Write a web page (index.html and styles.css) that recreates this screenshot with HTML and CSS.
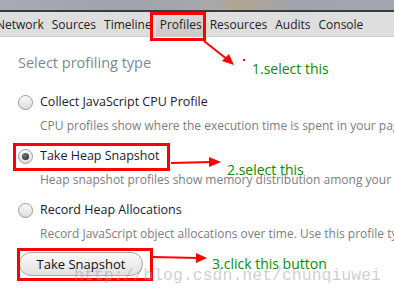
FILE: index.html
```html
<!DOCTYPE html>
<html lang="en">
<head>
    <meta charset="UTF-8">
    <title>Profiles</title>
    <link rel="stylesheet" href="styles.css">
</head>
<body>
    <div class="shot">
        <div class="window-strip"></div>

        <!-- DevTools tabs -->
        <div class="toolbar">
            <span class="tab tab-first">Network</span>
            <span class="tab">Sources</span>
            <span class="tab">Timeline</span>
            <span class="tab active">Profiles</span>
            <span class="tab">Resources</span>
            <span class="tab">Audits</span>
            <span class="tab">Console</span>
        </div>

        <div class="panel">
            <h2 class="panel-title">Select profiling type</h2>

            <div class="option">
                <label class="option-label"><span class="radio"></span>Collect JavaScript CPU Profile</label>
                <p class="option-desc">CPU profiles show where the execution time is spent in your page's JavaScript functions.</p>
            </div>

            <div class="option">
                <label class="option-label"><span class="radio checked"></span>Take Heap Snapshot</label>
                <p class="option-desc">Heap snapshot profiles show memory distribution among your page's JavaScript objects.</p>
            </div>

            <div class="option">
                <label class="option-label"><span class="radio"></span>Record Heap Allocations</label>
                <p class="option-desc">Record JavaScript object allocations over time. Use this profile type to isolate memory leaks.</p>
            </div>

            <button class="snap-btn">Take Snapshot</button>
        </div>

        <!-- annotations drawn over the screenshot -->
        <div class="mark mark-tab"></div>
        <div class="mark mark-heap"></div>
        <div class="mark mark-btn"></div>

        <svg class="arrows" width="394" height="296" viewBox="0 0 394 296">
            <g stroke="#f00" stroke-width="2" fill="none">
                <line x1="204" y1="41" x2="228" y2="60"/>
                <line x1="171" y1="163" x2="212" y2="162"/>
                <line x1="153" y1="257" x2="198" y2="258"/>
            </g>
            <g fill="#f00">
                <polygon points="234,65 222,61 229,54"/>
                <polygon points="221,162 209,157 209,167"/>
                <polygon points="207,258 196,253 196,263"/>
                <rect x="243" y="59" width="2" height="2"/>
            </g>
        </svg>

        <span class="note note-1">1.select this</span>
        <span class="note note-2">2.select this</span>
        <span class="note note-3">3.click this button</span>

        <span class="watermark">http://blog.csdn.net/chunqiuwei</span>
    </div>
</body>
</html>
```

FILE: styles.css
```css
body {
  margin: 0;
  background-color: #ffffff;
  font-family: "Open Sans", "Noto Sans", sans-serif;
}
.shot {
  position: relative;
  width: 394px;
  height: 296px;
  overflow: hidden;
}
.window-strip {
  height: 10px;
  background: linear-gradient(90deg, #a9acb2, #9ea2aa 30%, #a8a9ab 55%, #b0a68e 60%, #9ea3ad 75%, #a2a6b0);
  border-bottom: 2px solid #3a3b3e;
}
.toolbar {
  display: flex;
  height: 24px;
  background-color: #dedede;
  border-bottom: 1px solid #d0d0d0;
  font-size: 12px;
  color: #222;
  white-space: nowrap;
}
.tab {
  padding: 3px 4px 0 4px;
  line-height: 20px;
}
.tab-first {
  margin-left: -8px;
}
.tab.active {
  background: linear-gradient(#dcdcdc, #c9c9c9);
}
.panel {
  padding: 16px 18px 0 18px;
  white-space: nowrap;
}
.panel-title {
  margin: 0 0 20px 0;
  font-size: 14.5px;
  line-height: 20px;
  font-weight: normal;
  color: #7b8895;
}
.option {
  margin-bottom: 13px;
}
.option:last-of-type {
  margin-bottom: 10px;
}
.option-label {
  display: flex;
  align-items: center;
  gap: 7px;
  font-size: 12.5px;
  line-height: 18px;
  color: #231a2e;
  height: 18px;
}
.radio {
  width: 13px;
  height: 13px;
  border-radius: 50%;
  border: 1px solid #9a9a9a;
  background: linear-gradient(#fbfbfb, #dcdcdc);
  position: relative;
}
.radio.checked::after {
  content: "";
  position: absolute;
  left: 3px;
  top: 3px;
  width: 7px;
  height: 7px;
  border-radius: 50%;
  background: radial-gradient(circle at 40% 35%, #777, #222);
}
.option-desc {
  margin: 6px 0 0 22px;
  font-size: 12px;
  line-height: 17px;
  color: #7d7d7d;
}
.snap-btn {
  margin-top: 0;
  margin-left: 1px;
  width: 124px;
  height: 24px;
  border: 1px solid #a8a8a8;
  border-radius: 12px;
  background: linear-gradient(#fafafa, #e2e2e2);
  font-family: inherit;
  font-size: 13px;
  color: #111;
}
.mark {
  position: absolute;
  border: 3px solid #f00;
}
.mark-tab {
  left: 150px;
  top: 12px;
  width: 50px;
  height: 23px;
}
.mark-heap {
  left: 13px;
  top: 143px;
  width: 151px;
  height: 22px;
}
.mark-btn {
  left: 17px;
  top: 248px;
  width: 130px;
  height: 27px;
}
.arrows {
  position: absolute;
  left: 0;
  top: 0;
}
.note {
  position: absolute;
  font-size: 14px;
  color: #0a8a0a;
  white-space: nowrap;
}
.note-1 {
  left: 252px;
  top: 59px;
}
.note-2 {
  left: 227px;
  top: 160px;
}
.note-3 {
  left: 212px;
  top: 254px;
}
.watermark {
  position: absolute;
  left: 74px;
  top: 266px;
  font-family: "Liberation Mono", monospace;
  font-size: 16.5px;
  color: rgba(160, 160, 160, 0.5);
  white-space: nowrap;
}
```
